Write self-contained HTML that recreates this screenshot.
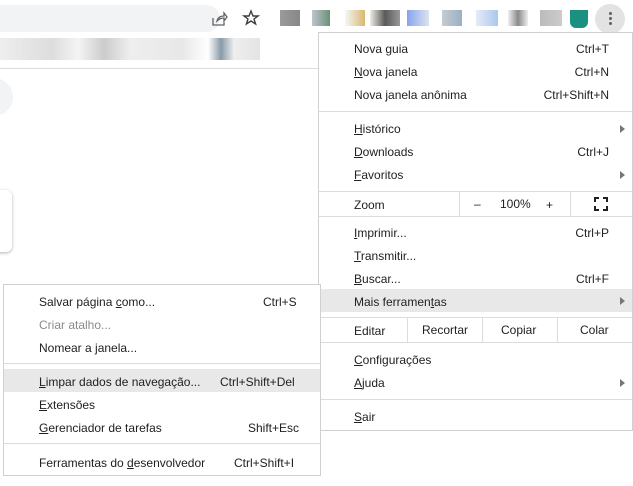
<!DOCTYPE html><html><head><style>
body{margin:0;width:633px;height:486px;overflow:hidden;background:#fff;font-family:"Liberation Sans",sans-serif;font-size:12px;color:#202124;position:relative}
.a{position:absolute}
.t{position:absolute;white-space:nowrap;line-height:14px;transform:translateY(1px)}
.sep{position:absolute;height:1px;background:#dadce0}
.b{position:absolute}
u{text-decoration:underline}
.arr{position:absolute;width:0;height:0;border-left:5px solid #777;border-top:4px solid transparent;border-bottom:4px solid transparent}
</style></head><body>
<div class="a" style="left:-20px;top:5px;width:240px;height:27px;background:#f1f3f4;border-radius:14px"></div>
<svg class="a" style="left:210px;top:10px" width="18" height="18" viewBox="0 0 18 18" fill="none" stroke="#5f6368" stroke-width="1.3"><path d="M3 8v7h11v-3M7 11c1-4 4-5 7-5V3l3 4-3 4V8c-3 0-5 1-7 3z"/></svg>
<svg class="a" style="left:242px;top:9px" width="18" height="18" viewBox="0 0 18 18" fill="none" stroke="#3c4043" stroke-width="1.4"><path d="M9 2l2 5h5l-4 3 1.6 5L9 12l-4.6 3L6 10 2 7h5z"/></svg>
<div class="a" style="left:280px;top:10px;width:20px;height:16px;background:linear-gradient(90deg,#9a9a9a,#888)"></div>
<div class="a" style="left:312px;top:10px;width:18px;height:16px;background:linear-gradient(90deg,#c0c4cc,#6a9078)"></div>
<div class="a" style="left:345px;top:10px;width:20px;height:16px;background:linear-gradient(90deg,#f5f7f8,#d8b870)"></div>
<div class="a" style="left:370px;top:10px;width:30px;height:16px;background:linear-gradient(90deg,#f0ece8,#5a5a5a,#999)"></div>
<div class="a" style="left:407px;top:10px;width:22px;height:16px;background:linear-gradient(90deg,#86a4ee,#dde3ee)"></div>
<div class="a" style="left:442px;top:10px;width:20px;height:16px;background:linear-gradient(90deg,#c4ccd4,#9ab0c4)"></div>
<div class="a" style="left:476px;top:10px;width:22px;height:16px;background:linear-gradient(90deg,#e6ecf6,#a8c8ec)"></div>
<div class="a" style="left:508px;top:10px;width:20px;height:16px;background:linear-gradient(90deg,#f0f0f0,#8a8a8a,#eee)"></div>
<div class="a" style="left:540px;top:10px;width:22px;height:16px;background:linear-gradient(90deg,#bbb,#ccc)"></div>
<div class="a" style="left:570px;top:10px;width:18px;height:18px;background:#1a9080;border-radius:0 0 6px 6px"></div>
<div class="a" style="left:595px;top:4px;width:30px;height:30px;border-radius:50%;background:#e3e3e3"></div>
<div class="a" style="left:609px;top:12px;width:3px;height:3px;border-radius:50%;background:#5f6368;box-shadow:0 5px 0 #5f6368,0 10px 0 #5f6368"></div>
<div class="a" style="left:0;top:38px;width:260px;height:22px;background:linear-gradient(90deg,#eee,#ddd 20%,#f4f4f4 30%,#ccc 40%,#eee 50%,#e8e8e8 70%,#fff 80%,#8a9aa8 85%,#eee 90%,#e4e4e4)"></div>
<div class="a" style="left:0;top:68px;width:320px;height:1px;background:#dadce0"></div>
<div class="a" style="left:-25px;top:78px;width:38px;height:38px;border-radius:50%;background:#f1f3f4"></div>
<div class="a" style="left:-10px;top:190px;width:22px;height:62px;border-radius:6px;box-shadow:0 1px 3px rgba(0,0,0,.3);background:#fff"></div>

<div class="a" style="left:318px;top:32px;width:313px;height:397px;background:#fff;border:1px solid #d0d0d0"></div>
<div class="t" style="left:354px;top:41px">Nova <u>g</u>uia</div><div class="t" style="right:24px;top:41px">Ctrl+T</div>
<div class="t" style="left:354px;top:64px"><u>N</u>ova janela</div><div class="t" style="right:24px;top:64px">Ctrl+N</div>
<div class="t" style="left:354px;top:87px">Nova janela anônima</div><div class="t" style="right:24px;top:87px">Ctrl+Shift+N</div>
<div class="sep" style="left:319px;top:111px;width:313px"></div>
<div class="t" style="left:354px;top:121px"><u>H</u>istórico</div><div class="arr" style="left:620px;top:125px"></div>
<div class="t" style="left:354px;top:144px"><u>D</u>ownloads</div><div class="t" style="right:24px;top:144px">Ctrl+J</div>
<div class="t" style="left:354px;top:167px"><u>F</u>avoritos</div><div class="arr" style="left:620px;top:171px"></div>
<div class="sep" style="left:319px;top:191px;width:313px"></div>
<div class="t" style="left:354px;top:197px">Zoom</div>
<div class="b" style="left:459px;top:192px;width:1px;height:24px;background:#dadce0"></div>
<div class="b" style="left:570px;top:192px;width:1px;height:24px;background:#dadce0"></div>
<div class="t" style="left:474px;top:196px">–</div><div class="t" style="left:500px;top:196px">100%</div><div class="t" style="left:546px;top:197px">+</div>
<svg class="a" style="left:594px;top:197px" width="14" height="14" viewBox="0 0 14 14" fill="none" stroke="#202124" stroke-width="2"><path d="M1 5V1h4M9 1h4v4M13 9v4H9M5 13H1V9"/></svg>
<div class="sep" style="left:319px;top:216px;width:313px"></div>
<div class="t" style="left:354px;top:225px"><u>I</u>mprimir...</div><div class="t" style="right:24px;top:225px">Ctrl+P</div>
<div class="t" style="left:354px;top:248px"><u>T</u>ransmitir...</div>
<div class="t" style="left:354px;top:271px"><u>B</u>uscar...</div><div class="t" style="right:24px;top:271px">Ctrl+F</div>
<div class="a" style="left:319px;top:289px;width:313px;height:23px;background:#e8e8e8"></div>
<div class="t" style="left:354px;top:294px">Mais ferramen<u>t</u>as</div><div class="arr" style="left:620px;top:297px"></div>
<div class="sep" style="left:319px;top:317px;width:313px"></div>
<div class="t" style="left:354px;top:323px">Editar</div>
<div class="b" style="left:407px;top:318px;width:1px;height:24px;background:#dadce0"></div>
<div class="b" style="left:482px;top:318px;width:1px;height:24px;background:#dadce0"></div>
<div class="b" style="left:557px;top:318px;width:1px;height:24px;background:#dadce0"></div>
<div class="t" style="left:422px;top:322px">Recortar</div><div class="t" style="left:501px;top:322px">Copiar</div><div class="t" style="left:580px;top:322px">Colar</div>
<div class="sep" style="left:319px;top:342px;width:313px"></div>
<div class="t" style="left:354px;top:352px"><u>C</u>onfigurações</div>
<div class="t" style="left:354px;top:375px"><u>A</u>juda</div><div class="arr" style="left:620px;top:379px"></div>
<div class="sep" style="left:319px;top:399px;width:313px"></div>
<div class="t" style="left:354px;top:409px"><u>S</u>air</div>

<div class="a" style="left:3px;top:284px;width:316px;height:190px;background:#fff;border:1px solid #d0d0d0"></div>
<div class="t" style="left:39px;top:294px">Salvar página <u>c</u>omo...</div><div class="t" style="left:263px;top:294px">Ctrl+S</div>
<div class="t" style="left:39px;top:317px;color:#8a8a8a">Criar atalho...</div>
<div class="t" style="left:39px;top:340px">Nomear a janela...</div>
<div class="sep" style="left:4px;top:363px;width:316px"></div>
<div class="a" style="left:4px;top:369px;width:316px;height:23px;background:#e8e8e8"></div>
<div class="t" style="left:39px;top:374px"><u>L</u>impar dados de navegação...</div><div class="t" style="left:220px;top:374px">Ctrl+Shift+Del</div>
<div class="t" style="left:39px;top:397px"><u>E</u>xtensões</div>
<div class="t" style="left:39px;top:420px"><u>G</u>erenciador de tarefas</div><div class="t" style="left:248px;top:420px">Shift+Esc</div>
<div class="sep" style="left:4px;top:443px;width:316px"></div>
<div class="t" style="left:39px;top:455px">Ferramentas do <u>d</u>esenvolvedor</div><div class="t" style="left:234px;top:455px">Ctrl+Shift+I</div>
</body></html>
